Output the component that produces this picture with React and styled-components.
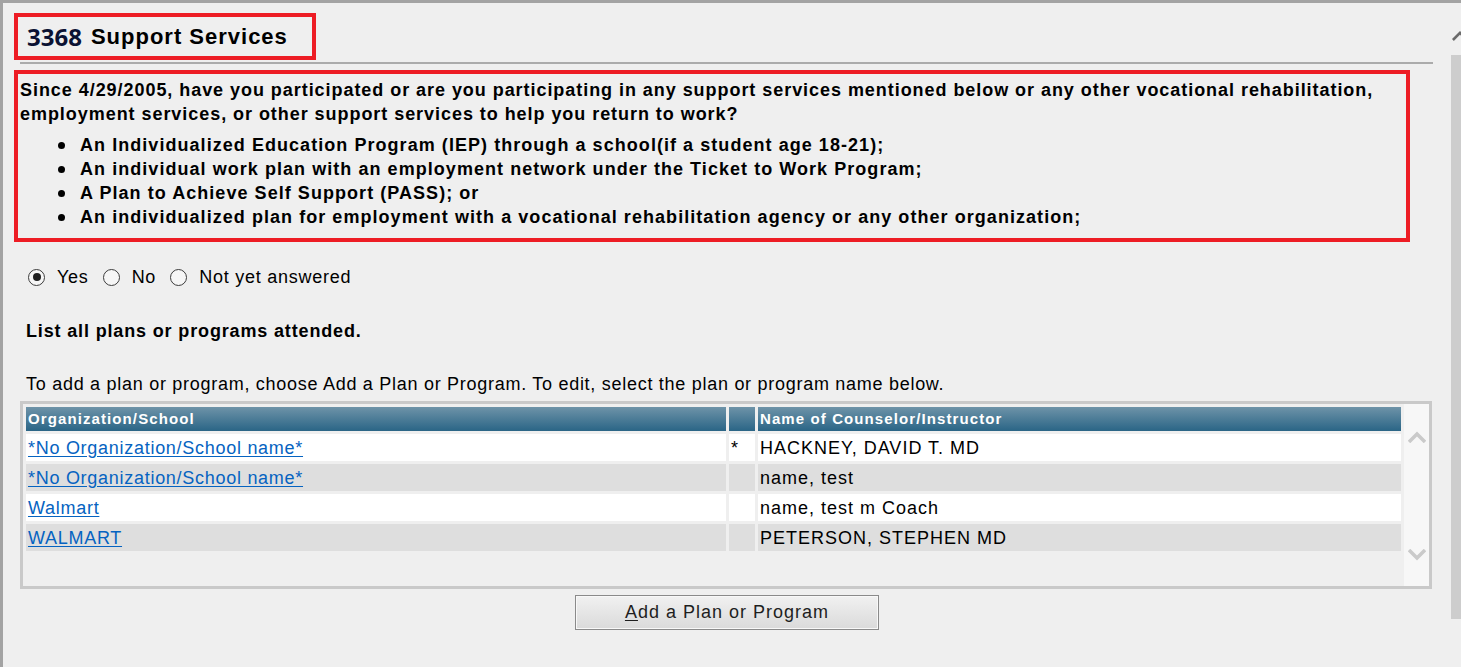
import styled, { createGlobalStyle } from 'styled-components';

const GlobalStyle = createGlobalStyle`
  html, body {
    margin: 0;
    padding: 0;
    background: #efefef;
    overflow: hidden;
  }
  * {
    box-sizing: border-box;
  }
`;

const Frame = styled.div`
  width: 1461px;
  height: 667px;
  display: flex;
  border-top: 3px solid #a3a3a3;
  border-left: 3px solid #a3a3a3;
  background: #efefef;
  font-family: 'Liberation Sans', Arial, sans-serif;
  color: #000;
  overflow: hidden;
`;

const Main = styled.div`
  flex: 1;
  display: flex;
  flex-direction: column;
  padding-top: 10px;
  min-width: 0;
`;

const Rail = styled.div`
  width: 22px;
  display: flex;
  flex-direction: column;
  align-items: flex-end;
  overflow: hidden;
`;

const RailArrow = styled.div`
  height: 52px;
  width: 9px;
  padding-top: 24px;
  overflow: hidden;
`;

const RailTrack = styled.div`
  width: 10px;
  height: 564px;
  background: #cdcdcd;
`;

const TitleBox = styled.div`
  align-self: flex-start;
  margin-left: 11px;
  width: 302px;
  height: 47px;
  border: 4px solid #ed1c24;
  display: flex;
  align-items: center;
  padding-left: 9px;
  gap: 9px;
`;

const FormNo = styled.span`
  font-family: 'Open Sans', 'Noto Sans', sans-serif;
  font-weight: 700;
  font-size: 24px;
  color: #0b1233;
  line-height: 1;
`;

const Title = styled.span`
  font-weight: bold;
  font-size: 22px;
  letter-spacing: 1px;
  line-height: 1;
`;

const Divider = styled.div`
  margin: 2px 6px 0 17px;
  height: 2px;
  background: #ababab;
`;

const QuestionBox = styled.div`
  margin: 6px 0 0 11px;
  width: 1396px;
  height: 172px;
  border: 4px solid #ed1c24;
  padding: 4px 0 0 2px;
  font-weight: bold;
  font-size: 18px;
  line-height: 24px;
  letter-spacing: 0.95px;
`;

const Lead = styled.p`
  margin: 0 0 7px;
`;

const Bullets = styled.ul`
  margin: 0;
  padding: 0;
  list-style: none;
  letter-spacing: 1.05px;
`;

const Bullet = styled.li`
  display: flex;
  align-items: center;
  padding-left: 38px;

  &::before {
    content: '';
    width: 7px;
    height: 7px;
    border-radius: 50%;
    background: #000;
    margin-right: 15px;
    flex-shrink: 0;
  }
`;

const RadioRow = styled.div`
  margin: 23px 0 0 25px;
  height: 24px;
  display: flex;
  align-items: center;
  font-size: 18px;
  letter-spacing: 0.75px;
`;

const RadioOption = styled.label`
  display: flex;
  align-items: center;
  gap: 12px;
  margin-right: 14px;
`;

const RadioCircle = styled.span`
  width: 17px;
  height: 17px;
  border-radius: 50%;
  border: 1.5px solid #3c3c3c;
  background: #f6f6f6;
  display: flex;
  align-items: center;
  justify-content: center;

  &::after {
    content: '';
    width: 8px;
    height: 8px;
    border-radius: 50%;
    background: ${(p) => (p.$checked ? '#1f1f1f' : 'transparent')};
  }
`;

const Heading = styled.div`
  margin: 30px 0 0 23px;
  height: 24px;
  line-height: 24px;
  font-size: 18px;
  font-weight: bold;
  letter-spacing: 0.85px;
`;

const Note = styled.div`
  margin: 29px 0 0 23px;
  height: 24px;
  line-height: 24px;
  font-size: 18px;
  letter-spacing: 0.72px;
`;

const TableFrame = styled.div`
  margin: 5px 0 0 17px;
  width: 1412px;
  height: 188px;
  border: 3px solid #c9c9c9;
  display: flex;
`;

const Grid = styled.div`
  flex: 1;
  padding: 3px 0 0 3px;
  display: grid;
  grid-template-columns: 700px 26px 1fr;
  grid-auto-rows: 27px;
  grid-template-rows: 24px;
  column-gap: 3px;
  row-gap: 3px;
  align-content: start;
`;

const HeadCell = styled.div`
  background: linear-gradient(#6e93a8, #2a6586);
  color: #fff;
  font-weight: bold;
  font-size: 15px;
  letter-spacing: 1.1px;
  line-height: 24px;
  padding-left: 2px;
  white-space: nowrap;
`;

const Cell = styled.div`
  background: ${(p) => (p.$alt ? '#dedede' : '#ffffff')};
  font-size: 18px;
  line-height: 28px;
  letter-spacing: 1px;
  padding-left: 2px;
  white-space: nowrap;
  overflow: hidden;
`;

const OrgLink = styled.a`
  color: #0563c1;
  text-decoration: underline;
  text-underline-offset: 2px;
  letter-spacing: 0.72px;
  cursor: pointer;
`;

const ListScroll = styled.div`
  width: 25px;
  margin-left: 3px;
  background: #f7f7f7;
  display: flex;
  flex-direction: column;
  align-items: center;
  padding-top: 27px;
  gap: 106px;
`;

const ButtonRow = styled.div`
  margin-top: 6px;
  padding-left: 572px;
`;

const AddButton = styled.button`
  width: 304px;
  height: 35px;
  border: 1px solid #8a8a8a;
  box-shadow: inset 0 0 0 1px #f8f8f8;
  background: linear-gradient(#f1f1f1, #dadada);
  font-family: 'Liberation Sans', Arial, sans-serif;
  font-size: 18px;
  letter-spacing: 1px;
  color: #1e1e1e;
  padding: 0;

  u {
    text-underline-offset: 2px;
  }
`;

const Chevron = ({ up, color, width = 18, height = 12, stroke = 3.5 }) => (
  <svg width={width} height={height} viewBox="0 0 18 12">
    <polyline
      points={up ? '1,11 9,3 17,11' : '1,1 9,9 17,1'}
      fill="none"
      stroke={color}
      strokeWidth={stroke}
    />
  </svg>
);

const rows = [
  { org: '*No Organization/School name*', mark: '*', name: 'HACKNEY, DAVID T. MD' },
  { org: '*No Organization/School name*', mark: '', name: 'name, test' },
  { org: 'Walmart', mark: '', name: 'name, test m Coach' },
  { org: 'WALMART', mark: '', name: 'PETERSON, STEPHEN MD' },
];

const options = [
  { label: 'Yes', checked: true },
  { label: 'No', checked: false },
  { label: 'Not yet answered', checked: false },
];

export default function App() {
  return (
    <>
      <GlobalStyle />
      <Frame>
        <Main>
          <TitleBox>
            <FormNo>3368</FormNo>
            <Title>Support Services</Title>
          </TitleBox>
          <Divider />

          <QuestionBox>
            <Lead>
              Since 4/29/2005, have you participated or are you participating in any support
              services mentioned below or any other vocational rehabilitation, employment
              services, or other support services to help you return to work?
            </Lead>
            <Bullets>
              <Bullet>An Individualized Education Program (IEP) through a school(if a student age 18-21);</Bullet>
              <Bullet>An individual work plan with an employment network under the Ticket to Work Program;</Bullet>
              <Bullet>A Plan to Achieve Self Support (PASS); or</Bullet>
              <Bullet>An individualized plan for employment with a vocational rehabilitation agency or any other organization;</Bullet>
            </Bullets>
          </QuestionBox>

          <RadioRow>
            {options.map((o) => (
              <RadioOption key={o.label}>
                <RadioCircle $checked={o.checked} />
                {o.label}
              </RadioOption>
            ))}
          </RadioRow>

          <Heading>List all plans or programs attended.</Heading>
          <Note>
            To add a plan or program, choose Add a Plan or Program. To edit, select the plan or
            program name below.
          </Note>

          <TableFrame>
            <Grid>
              <HeadCell>Organization/School</HeadCell>
              <HeadCell />
              <HeadCell>Name of Counselor/Instructor</HeadCell>
              {rows.map((r, i) => [
                <Cell key={`o${i}`} $alt={i % 2 === 1}>
                  <OrgLink>{r.org}</OrgLink>
                </Cell>,
                <Cell key={`m${i}`} $alt={i % 2 === 1}>{r.mark}</Cell>,
                <Cell key={`n${i}`} $alt={i % 2 === 1}>{r.name}</Cell>,
              ])}
            </Grid>
            <ListScroll>
              <Chevron up color="#cacaca" />
              <Chevron color="#cacaca" />
            </ListScroll>
          </TableFrame>

          <ButtonRow>
            <AddButton>
              <u>A</u>dd a Plan or Program
            </AddButton>
          </ButtonRow>
        </Main>
        <Rail>
          <RailArrow>
            <Chevron up color="#6a6a6a" width={16} height={11} stroke={3} />
          </RailArrow>
          <RailTrack />
        </Rail>
      </Frame>
    </>
  );
}
